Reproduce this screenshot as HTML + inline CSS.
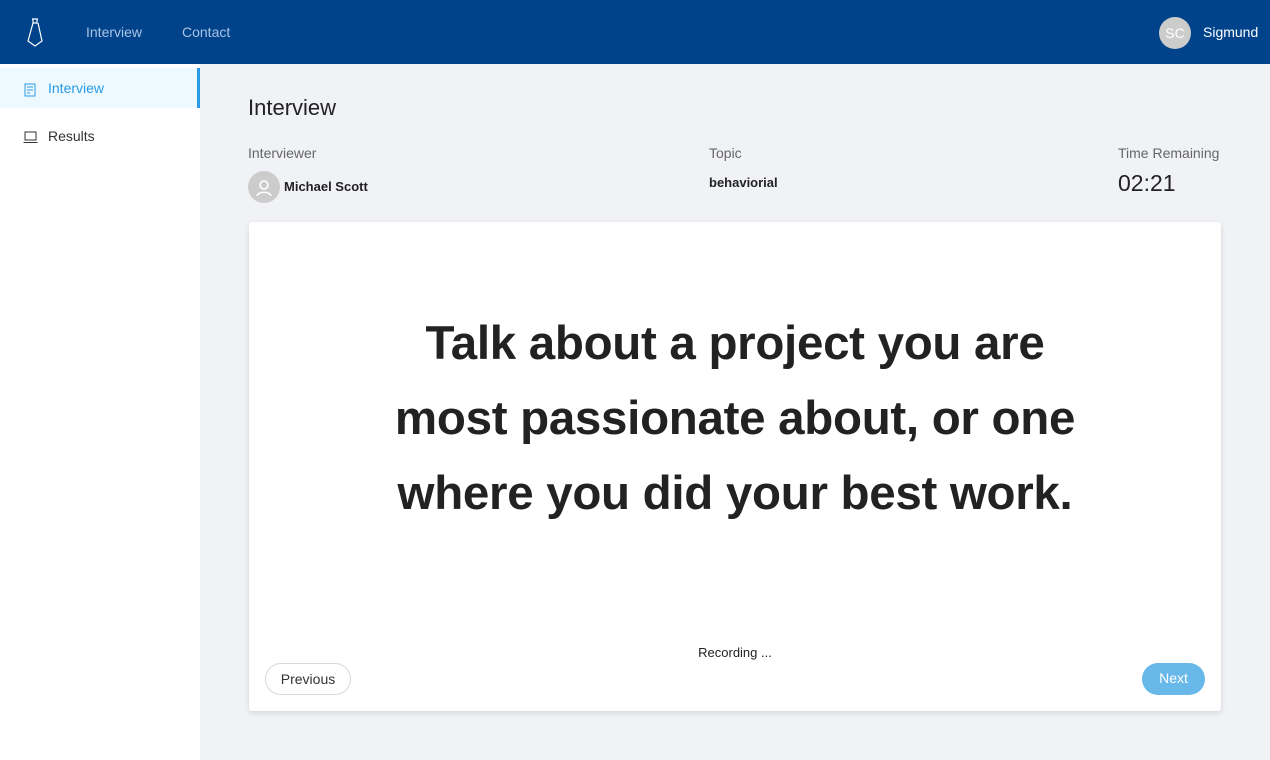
<!DOCTYPE html>
<html><head><style>
*{box-sizing:border-box;margin:0;padding:0}
body{width:1270px;height:760px;overflow:hidden;background:#f0f2f5;font-family:"Liberation Sans",sans-serif;position:relative}
.top{position:absolute;left:0;top:0;width:1270px;height:64px;background:#00438a}
.top a{position:absolute;top:24px;color:#a9c3e6;font-size:14px}
.side{position:absolute;left:0;top:64px;width:200px;height:696px;background:#fff}
.item{position:absolute;left:0;width:200px;height:40px;font-size:14px;line-height:40px;padding-left:48px;color:#333}
.lbl{position:absolute;font-size:14px;color:#666}
.card{position:absolute;left:249px;top:222px;width:972px;height:489px;background:#fff;border-radius:3px;box-shadow:0 2px 6px rgba(0,0,0,.12)}
.q{position:absolute;left:0;top:84px;width:972px;text-align:center;font-weight:bold;font-size:47.5px;line-height:75px;color:#222;letter-spacing:-0.3px}
.btn{position:absolute;top:441px;height:32px;border-radius:16px;font-size:14px;line-height:30px;text-align:center}
</style></head><body>
<div class="top">
<svg style="position:absolute;left:26px;top:17px" width="18" height="32" viewBox="0 0 18 32" fill="none" stroke="#fff" stroke-width="1.2"><path d="M6 2h6M7 2v4h4V2M7 6L2 24l7 5 7-5-4-18"/></svg>
<a style="left:86px">Interview</a><a style="left:182px">Contact</a>
<div style="position:absolute;left:1159px;top:17px;width:32px;height:32px;border-radius:50%;background:#ccc;color:#fff;font-size:14px;line-height:32px;text-align:center">SC</div>
<div style="position:absolute;left:1203px;top:24px;color:#fff;font-size:14px">Sigmund</div>
</div>
<div class="side">
<div class="item" style="top:4px;background:#eef9ff;color:#2a9be6;border-right:3px solid #2a9be6">Interview</div>
<svg style="position:absolute;left:24px;top:19px" width="13" height="14" viewBox="0 0 13 14" fill="none" stroke="#2a9be6"><rect x="1" y="1" width="10" height="12"/><path d="M3 4h6M3 7h6M3 10h3"/></svg>
<div class="item" style="top:52px">Results</div>
<svg style="position:absolute;left:23px;top:67px" width="15" height="13" viewBox="0 0 15 13" fill="none" stroke="#333"><rect x="2" y="1" width="11" height="8"/><path d="M0.5 11.5h14"/></svg>
</div>
<div style="position:absolute;left:248px;top:95px;font-size:22px;color:#222">Interview</div>
<div class="lbl" style="left:248px;top:145px">Interviewer</div>
<div style="position:absolute;left:248px;top:171px;width:32px;height:32px;border-radius:50%;background:#ccc"><svg width="32" height="32" viewBox="0 0 32 32" fill="none" stroke="#fff" stroke-width="1.6"><circle cx="16" cy="14" r="4"/><path d="M9 25c1-5 13-5 14 0"/></svg></div>
<div style="position:absolute;left:284px;top:179px;font-size:13px;font-weight:bold;color:#222">Michael Scott</div>
<div class="lbl" style="left:709px;top:145px">Topic</div>
<div style="position:absolute;left:709px;top:175px;font-size:13px;font-weight:bold;color:#222">behaviorial</div>
<div class="lbl" style="left:1118px;top:145px">Time Remaining</div>
<div style="position:absolute;left:1118px;top:170px;font-size:23px;color:#222">02:21</div>
<div class="card">
<div class="q">Talk about a project you are<br>most passionate about, or one<br>where you did your best work.</div>
<div style="position:absolute;left:0;width:972px;top:423px;text-align:center;font-size:13px;color:#222">Recording ...</div>
<div class="btn" style="left:16px;width:86px;border:1px solid #d9d9d9;color:#333">Previous</div>
<div class="btn" style="left:893px;width:63px;background:#69b8ea;color:#fff">Next</div>
</div>
</body></html>
